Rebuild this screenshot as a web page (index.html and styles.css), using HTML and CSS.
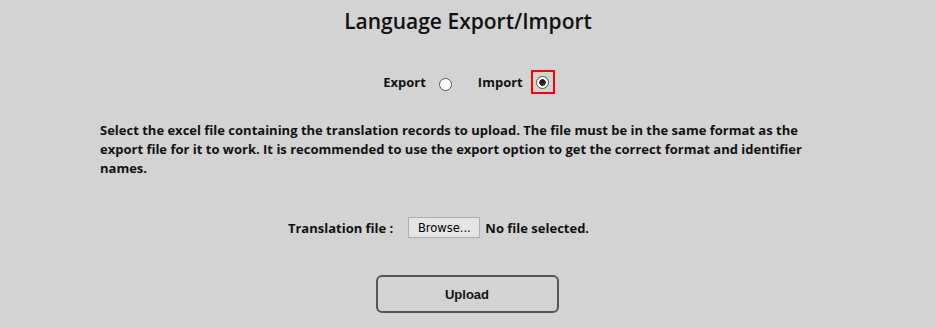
FILE: index.html
```html
<!DOCTYPE html>
<html lang="en">
<head>
    <meta charset="UTF-8">
    <title>Language Export/Import</title>
    <link rel="stylesheet" href="styles.css">
</head>
<body>
<div class="lang-page">
    <h1 class="lang-title">Language Export/Import</h1>

    <div class="mode-row">
        <label class="mode-option">
            <span>Export</span>
            <span class="radio-wrap"><input type="radio" name="mode" value="export"></span>
        </label>
        <label class="mode-option">
            <span>Import</span>
            <span class="radio-wrap focused"><input type="radio" name="mode" value="import" checked></span>
        </label>
    </div>

    <p class="intro">
        Select the excel file containing the translation records to upload. The file must be in the same format as the
        export file for it to work. It is recommended to use the export option to get the correct format and identifier
        names.
    </p>

    <div class="file-row">
        <span class="file-label">Translation file :</span>
        <button type="button" class="browse-btn">Browse...</button>
        <span class="file-name">No file selected.</span>
    </div>

    <div class="actions">
        <button type="button" class="upload-btn">Upload</button>
    </div>
</div>
</body>
</html>
```

FILE: styles.css
```css
body {
    margin: 0;
    background: #d3d3d3;
    color: #111;
    font-family: "Open Sans", "DejaVu Sans", sans-serif;
    font-weight: bold;
    font-size: 13px;
}

.lang-page {
    display: flex;
    flex-direction: column;
    padding-top: 8px;
}

.lang-title {
    margin: 0;
    text-align: center;
    font-size: 21px;
    line-height: 26px;
    font-weight: 600;
}

.mode-row {
    display: flex;
    justify-content: center;
    align-items: center;
    gap: 20px;
    margin-top: 36px;
    height: 24px;
    padding-left: 2px;
}

.mode-option {
    display: flex;
    align-items: center;
    gap: 8px;
}

.radio-wrap {
    display: flex;
    align-items: center;
    justify-content: center;
    width: 24px;
    height: 24px;
    box-sizing: border-box;
    border: 2px solid transparent;
}

.radio-wrap.focused {
    border-color: #f00;
}

.radio-wrap input {
    appearance: none;
    margin: 0;
    width: 13px;
    height: 13px;
    border: 1px solid #555;
    border-radius: 50%;
    background: #fff;
    box-sizing: border-box;
    position: relative;
    top: 2px;
}

.radio-wrap.focused input {
    top: 0;
}

.radio-wrap input:checked {
    background: radial-gradient(circle, #222 0 3px, #fff 3.5px);
}

.intro {
    margin: 27px 100px 0;
    line-height: 19px;
}

.file-row {
    display: flex;
    justify-content: center;
    align-items: center;
    margin-top: 39px;
    padding-right: 59px;
}

.file-label {
    margin-right: 15px;
}

.browse-btn {
    height: 21px;
    width: 72px;
    padding: 0;
    border: 1px solid #adadad;
    background: #e5e5e5;
    color: #000;
    font-family: "DejaVu Sans", sans-serif;
    font-size: 11.5px;
    margin-right: 5px;
}

.actions {
    display: flex;
    justify-content: center;
    margin-top: 37px;
    padding-right: 2px;
}

.upload-btn {
    width: 183px;
    height: 38px;
    border: 2px solid #555;
    border-radius: 6px;
    background: transparent;
    color: #111;
    font-family: "Liberation Sans", Arial, sans-serif;
    font-weight: bold;
    font-size: 13px;
}
```
